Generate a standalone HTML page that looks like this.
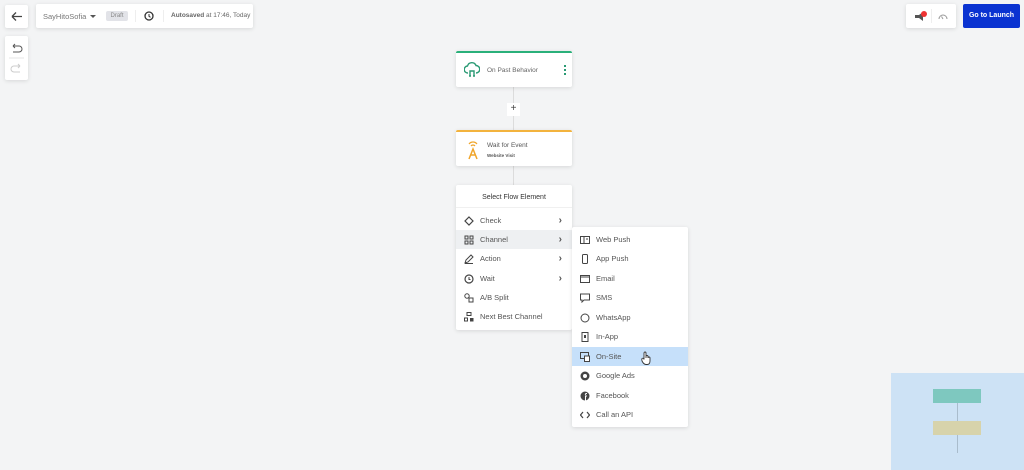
<!DOCTYPE html>
<html><head><style>
*{margin:0;padding:0;box-sizing:border-box}
body{width:1024px;height:470px;background:#f3f4f5;font-family:"Liberation Sans",sans-serif;position:relative;overflow:hidden;color:#444}
.box{position:absolute;background:#fff;box-shadow:0 1px 4px rgba(0,0,0,.12);border-radius:2px}
.t{position:absolute;font-size:7.5px;color:#555;white-space:nowrap}
.row{position:absolute;left:0;width:116px;height:19.4px;font-size:7.5px;color:#555;display:flex;align-items:center;padding-left:24px}
.row svg{position:absolute;left:8px;top:5px}
.chev{position:absolute;right:10px;top:4px;font-size:10px;font-weight:bold;color:#555}
.line{position:absolute;left:513px;width:1px;background:#dcdcdc}
</style></head><body>
<div class="box" style="left:5px;top:5px;width:23px;height:23px"><svg width="23" height="23"><path d="M7 11.5h10M7 11.5l4-4M7 11.5l4 4" stroke="#444" stroke-width="1.3" fill="none"/></svg></div>
<div class="box" style="left:36px;top:4px;width:217px;height:24px">
<div class="t" style="left:7px;top:8px;color:#777">SayHitoSofia</div>
<div style="position:absolute;left:54px;top:11px;border:3px solid transparent;border-top:3.5px solid #555"></div>
<div style="position:absolute;left:70px;top:7px;width:22px;height:10px;background:#e2e3e8;border-radius:2px;font-size:6px;color:#888;text-align:center;line-height:10px">Draft</div>
<div style="position:absolute;left:99px;top:6px;width:1px;height:12px;background:#eee"></div>
<svg style="position:absolute;left:108px;top:7px" width="10" height="10"><circle cx="5" cy="5" r="4" stroke="#333" stroke-width="1.3" fill="none"/><path d="M5 3v2.3l1.5 1" stroke="#333" stroke-width="1" fill="none"/></svg>
<div style="position:absolute;left:127px;top:6px;width:1px;height:12px;background:#eee"></div>
<div class="t" style="left:135px;top:8px;font-size:6.5px;color:#666"><b>Autosaved</b> at 17:46, Today</div>
</div>
<div class="box" style="left:5px;top:36px;width:23px;height:44px">
<svg width="23" height="44"><path d="M8 10h6a3 3 0 010 6H8M8 10l2-2M8 10l2 2" stroke="#555" stroke-width="1" fill="none"/><path d="M4 22h15" stroke="#e6e6e6"/><path d="M15 30H9a3 3 0 000 6h6M15 30l-2-2M15 30l-2 2" stroke="#ccc" stroke-width="1" fill="none"/></svg></div>
<div class="box" style="left:906px;top:4px;width:50px;height:24px">
<svg style="position:absolute;left:8px;top:7px" width="14" height="12"><path d="M1 4h4l4-3v9l-4-3H1z" fill="#555"/><circle cx="10" cy="3" r="3" fill="#e33"/></svg>
<div style="position:absolute;left:25px;top:5px;width:1px;height:14px;background:#eee"></div>
<svg style="position:absolute;left:32px;top:8px" width="10" height="8"><path d="M1 7a4 4 0 018 0M5 7l-1.5-2.5" stroke="#999" fill="none"/></svg>
</div>
<div style="position:absolute;left:963px;top:4px;width:57px;height:24px;background:#0a33d1;border-radius:2px;color:#fff;font-size:7px;font-weight:bold;text-align:center;line-height:24px">Go to Launch</div>

<div class="line" style="top:87px;height:43px"></div>
<div class="line" style="top:166px;height:19px"></div>
<div style="position:absolute;left:507px;top:103px;width:13px;height:13px;background:#fff;font-size:10px;text-align:center;line-height:12px;color:#444">+</div>

<div class="box" style="left:456px;top:51px;width:116px;height:36px;border-top:2px solid #2ab07a">
<svg style="position:absolute;left:8px;top:9px" width="16" height="16"><path d="M4 11a3.5 3.5 0 01-.5-7A4.5 4.5 0 0112 3.5 3.5 3.5 0 0112 11" stroke="#2a9a74" stroke-width="1.4" fill="none"/><path d="M6 14V9h4v5M5 14h2M9 14h2" stroke="#2a9a74" stroke-width="1.4" fill="none"/></svg>
<div class="t" style="left:31px;top:14px;font-size:6.5px;color:#666">On Past Behavior</div>
<div style="position:absolute;left:108px;top:12px;width:2px;height:2px;background:#2a9a74;box-shadow:0 4px #2a9a74,0 8px #2a9a74"></div>
</div>
<div class="box" style="left:456px;top:130px;width:116px;height:36px;border-top:2px solid #f3b33d">
<svg style="position:absolute;left:10px;top:8px" width="14" height="20"><path d="M3 4a5 5 0 018 0M5 6a2.5 2.5 0 014 0" stroke="#f0a52a" stroke-width="1.2" fill="none"/><path d="M3 19l4-10 4 10M4.5 15h5" stroke="#f0a52a" stroke-width="1.5" fill="none"/></svg>
<div class="t" style="left:31px;top:10px;font-size:6.5px;color:#555">Wait for Event</div>
<div class="t" style="left:31px;top:21px;font-size:4.5px;color:#555;font-weight:bold">Website Visit</div>
</div>

<div class="box" style="left:456px;top:185px;width:116px;height:145px">
<div class="t" style="left:0;width:116px;text-align:center;top:9px;font-size:7px;color:#333">Select Flow Element</div>
<div style="position:absolute;left:0;top:22px;width:116px;height:1px;background:#f0f0f0"></div>
<div class="row" style="top:25.5px"><svg width="10" height="10"><path d="M5 1l4 4-4 4-4-4z" stroke="#444" stroke-width="1.2" fill="none"/></svg>Check<span class="chev">›</span></div>
<div class="row" style="top:45px;background:#eef0f2"><svg width="10" height="10"><rect x="1" y="1" width="3" height="3" stroke="#444" fill="none"/><rect x="6" y="1" width="3" height="3" stroke="#444" fill="none"/><rect x="1" y="6" width="3" height="3" stroke="#444" fill="none"/><rect x="6" y="6" width="3" height="3" stroke="#444" fill="none"/></svg>Channel<span class="chev">›</span></div>
<div class="row" style="top:64px"><svg width="10" height="10"><path d="M1 9l1-3 5-5 2 2-5 5zM1 9.5h8" stroke="#444" fill="none"/></svg>Action<span class="chev">›</span></div>
<div class="row" style="top:83.5px"><svg width="10" height="10"><circle cx="5" cy="5" r="4" stroke="#444" stroke-width="1.2" fill="none"/><path d="M5 3v2.5h1.5" stroke="#444" fill="none"/></svg>Wait<span class="chev">›</span></div>
<div class="row" style="top:103px"><svg width="10" height="10"><circle cx="3" cy="3" r="2.2" stroke="#444" fill="none"/><rect x="5" y="5" width="4" height="4" stroke="#444" fill="none"/></svg>A/B Split</div>
<div class="row" style="top:122px"><svg width="10" height="10"><rect x="3" y="0.5" width="4" height="3" stroke="#444" fill="none"/><rect x="0.5" y="6" width="3" height="3" stroke="#444" fill="none"/><rect x="6" y="6" width="3.5" height="3.5" fill="#444"/></svg>Next Best Channel</div>
</div>

<div class="box" style="left:572px;top:227px;width:116px;height:200px">
<div class="row" style="top:2.5px"><svg width="10" height="10"><rect x="0.5" y="1.5" width="9" height="7" stroke="#444" fill="none"/><path d="M4 1.5v7M6 4h2" stroke="#444"/></svg>Web Push</div>
<div class="row" style="top:22px"><svg width="10" height="10"><rect x="2.5" y="0.5" width="5" height="9" rx="1" stroke="#444" fill="none"/></svg>App Push</div>
<div class="row" style="top:41.5px"><svg width="10" height="10"><rect x="0.5" y="1.5" width="9" height="7" stroke="#444" fill="none"/><path d="M0.5 3h9" stroke="#444"/></svg>Email</div>
<div class="row" style="top:61px"><svg width="10" height="10"><path d="M.5 1h9v6H4L2 9V7H.5z" stroke="#444" fill="none"/></svg>SMS</div>
<div class="row" style="top:80.5px"><svg width="10" height="10"><circle cx="5" cy="5" r="4" stroke="#444" fill="none"/></svg>WhatsApp</div>
<div class="row" style="top:100px"><svg width="10" height="10"><rect x="2" y="0.5" width="6" height="9" stroke="#444" fill="none"/><rect x="4" y="3" width="2" height="3" fill="#444"/></svg>In-App</div>
<div class="row" style="top:119.5px;background:#c6e0fa"><svg width="10" height="10"><rect x="0.5" y="0.5" width="8" height="6" stroke="#444" fill="none"/><rect x="4.5" y="4" width="5" height="5.5" fill="#fff" stroke="#444"/></svg>On-Site<svg style="left:69px;top:4px" width="10" height="14"><path d="M3 8V2a1 1 0 012 0v5V5.5a1 1 0 012 0V7a1 1 0 012 0v3c0 2-1 3.5-3 3.5H5C3.5 13.5 2 12 1 10L.8 8.5a1 1 0 012-.5z" fill="#fff" stroke="#333" stroke-width=".9"/></svg></div>
<div class="row" style="top:139px"><svg width="10" height="10"><circle cx="5" cy="5" r="4.5" fill="#444"/><circle cx="5" cy="5" r="2" fill="#fff"/></svg>Google Ads</div>
<div class="row" style="top:158.5px"><svg width="10" height="10"><circle cx="5" cy="5" r="4.5" fill="#444"/><path d="M5.5 10V5h1.5M5.5 4a1 1 0 011-1.5h.5" stroke="#fff" fill="none"/></svg>Facebook</div>
<div class="row" style="top:178px"><svg width="10" height="10"><path d="M3 2L0.5 5 3 8M7 2l2.5 3L7 8" stroke="#444" stroke-width="1.2" fill="none"/></svg>Call an API</div>
</div>

<div style="position:absolute;left:891px;top:373px;width:133px;height:97px;background:#cde2f5">
<div style="position:absolute;left:42px;top:16px;width:48px;height:14px;background:#7ec8bf"></div>
<div style="position:absolute;left:66px;top:30px;width:1px;height:18px;background:#a9bccc"></div>
<div style="position:absolute;left:42px;top:48px;width:48px;height:14px;background:#d7d3ab"></div>
<div style="position:absolute;left:66px;top:62px;width:1px;height:18px;background:#a9bccc"></div>
</div>
</body></html>
